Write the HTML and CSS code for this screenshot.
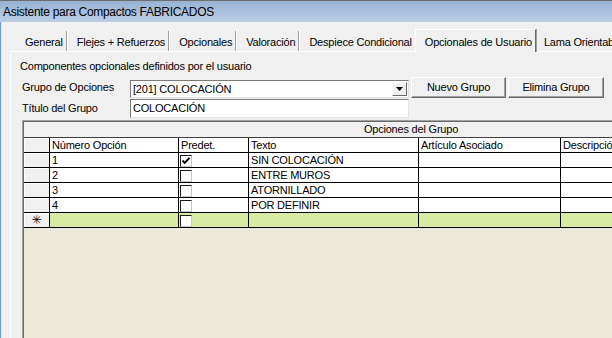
FILE: index.html
```html
<!DOCTYPE html>
<html lang="es">
<head>
  <meta charset="UTF-8" />
  <title>Asistente para Compactos FABRICADOS</title>
  <link rel="stylesheet" href="styles.css">
</head>
<body>
  <div class="window">
    <div class="titlebar">Asistente para Compactos FABRICADOS</div>
    <div class="frame">
      <div class="tabs">
        <div class="tab">General</div>
        <div class="tab">Flejes + Refuerzos</div>
        <div class="tab">Opcionales</div>
        <div class="tab">Valoración</div>
        <div class="tab plain">Despiece Condicional</div>
        <div class="tab active">Opcionales de Usuario</div>
        <div class="tab last">Lama Orientable</div>
      </div>

      <div class="panel">
        <p class="caption">Componentes opcionales definidos por el usuario</p>

        <div class="field-row first">
          <label>Grupo de Opciones</label>
          <div class="combo">
            <span class="value">[201] COLOCACIÓN</span>
            <span class="drop">
              <svg width="7" height="4" viewBox="0 0 7 4"><path d="M0 0h7L3.5 4z" fill="#000"/></svg>
            </span>
          </div>
          <button type="button" class="btn">Nuevo Grupo</button>
          <button type="button" class="btn wide">Elimina Grupo</button>
        </div>

        <div class="field-row second">
          <label>Título del Grupo</label>
          <div class="textbox">COLOCACIÓN</div>
        </div>

        <div class="grid">
          <div class="band">Opciones del Grupo</div>
          <div class="grow head">
            <div class="cell rh"></div>
            <div class="cell">Número Opción</div>
            <div class="cell">Predet.</div>
            <div class="cell">Texto</div>
            <div class="cell">Artículo Asociado</div>
            <div class="cell">Descripción</div>
          </div>
          <div class="grow">
            <div class="cell rh"></div>
            <div class="cell">1</div>
            <div class="cell"><span class="check"><svg width="10" height="10" viewBox="0 0 10 10"><path d="M1.5 4.5l2.2 2.4L8.5 1.8" fill="none" stroke="#000" stroke-width="1.9"/></svg></span></div>
            <div class="cell">SIN COLOCACIÓN</div>
            <div class="cell"></div>
            <div class="cell"></div>
          </div>
          <div class="grow">
            <div class="cell rh"></div>
            <div class="cell">2</div>
            <div class="cell"><span class="check"></span></div>
            <div class="cell">ENTRE MUROS</div>
            <div class="cell"></div>
            <div class="cell"></div>
          </div>
          <div class="grow">
            <div class="cell rh"></div>
            <div class="cell">3</div>
            <div class="cell"><span class="check"></span></div>
            <div class="cell">ATORNILLADO</div>
            <div class="cell"></div>
            <div class="cell"></div>
          </div>
          <div class="grow">
            <div class="cell rh"></div>
            <div class="cell">4</div>
            <div class="cell"><span class="check"></span></div>
            <div class="cell">POR DEFINIR</div>
            <div class="cell"></div>
            <div class="cell"></div>
          </div>
          <div class="grow new">
            <div class="cell rh star">✳</div>
            <div class="cell"></div>
            <div class="cell"><span class="check"></span></div>
            <div class="cell"></div>
            <div class="cell"></div>
            <div class="cell"></div>
          </div>
        </div>
      </div>
    </div>
  </div>
</body>
</html>
```

FILE: styles.css
```css
* { box-sizing: border-box; }
body { margin: 0; font-family: "Liberation Sans", Arial, sans-serif; font-size: 11px; letter-spacing: -0.2px; color: #000; overflow: hidden; }

.window { width: 612px; height: 338px; overflow: hidden; background: #f0f0f0; display: flex; flex-direction: column; }
.titlebar { flex: none; height: 22px; border-top: 1px solid #6e6e6e; padding: 3px 0 0 3px; font-size: 12px; letter-spacing: -0.3px; line-height: 17px; white-space: nowrap; background: linear-gradient(#98b2d3, #bccfe6); }
.frame { flex: 1; display: flex; flex-direction: column; min-height: 0; border-left: 1px solid #7397c6; box-shadow: inset 1px 0 #dbe5f1; }

/* tab strip */
.tabs { flex: none; display: flex; align-items: flex-end; height: 29px; padding-left: 14px; white-space: nowrap; }
.tab { height: 20px; padding: 2px 3px 0 10px; line-height: 18px; border-right: 1px solid #a0a0a0; box-shadow: 1px 0 0 #fff; }
.tab.plain { border-right: none; box-shadow: none; padding-right: 3px; }
.tab.active { position: relative; z-index: 1; height: 23px; margin-bottom: -1px; padding: 3px 3px 0 9px; background: #f0f0f0; border-top: 1px solid #fff; border-left: 1px solid #fff; border-right: 1px solid #696969; box-shadow: 1px 0 0 #a0a0a0; }
.tab.last { padding-left: 8px; border-right: none; box-shadow: none; }

/* page body */
.panel { flex: 1; min-height: 0; display: flex; flex-direction: column; margin-left: 9px; padding-left: 9px; border-top: 1px solid #fff; border-left: 1px solid #fff; }
.caption { flex: none; margin: 7px 0 0; line-height: 14px; }

.field-row { flex: none; display: flex; align-items: flex-start; }
.field-row.first { margin-top: 4px; height: 21px; }
.field-row.second { height: 20px; }
.field-row label { width: 108px; margin: 3px 0 0 2px; line-height: 14px; }

.combo, .textbox { width: 279px; background: #fff; border: 1px solid; border-color: #7a7a7a #e3e3e3 #e3e3e3 #7a7a7a; padding-left: 2px; line-height: 16px; white-space: nowrap; }
.combo { display: flex; height: 18px; margin-top: 3px; }
.combo .value { flex: 1; }
.combo .drop { width: 15px; height: 14px; margin: 1px 1px 0 0; display: flex; align-items: center; justify-content: center; background: #f0f0f0; border: 1px solid; border-color: #fff #696969 #696969 #fff; }
.textbox { height: 19px; margin-top: 1px; }

.btn { font: inherit; letter-spacing: inherit; color: #000; width: 95px; height: 21px; margin-left: 2px; padding: 0; background: #f0f0f0; border: 1px solid; border-color: #fff #696969 #696969 #fff; box-shadow: inset -1px -1px #a0a0a0; line-height: 19px; }
.btn.wide { width: 96px; }

/* options grid */
.grid { flex: 1; min-height: 0; margin: 2px 0 0 2px; padding: 1px 0 0 1px; overflow: hidden; background: #ece9d8; border-top: 1px solid #a0a0a0; border-left: 1px solid #a0a0a0; box-shadow: inset 1px 1px #696969; }
.band { width: 774px; height: 16px; line-height: 15px; text-align: center; background: #f0f0f0; border-bottom: 1px solid #404040; }
.grow { display: grid; grid-template-columns: 26px 129px 70px 170px 142px 237px; width: 774px; height: 15px; }
.cell { height: 15px; padding-left: 2px; line-height: 14px; white-space: nowrap; overflow: hidden; background: #fff; border-right: 1px solid #000; border-bottom: 1px solid #000; }
.cell.rh { background: #f0f0f0; box-shadow: inset 1px 1px #fff; }
.grow.new .cell { background: #d9eaa2; }
.grow.new .cell.rh { background: #f0f0f0; }
.star { font-family: "DejaVu Sans", sans-serif; font-size: 12px; letter-spacing: 0; text-align: center; padding-left: 0; }

.check { display: flex; align-items: center; justify-content: center; width: 12px; height: 12px; margin: 2px 0 0 -1px; background: #fff; border: 1px solid; border-color: #1a1a1a #c4c9bd #c4c9bd #1a1a1a; }
```
